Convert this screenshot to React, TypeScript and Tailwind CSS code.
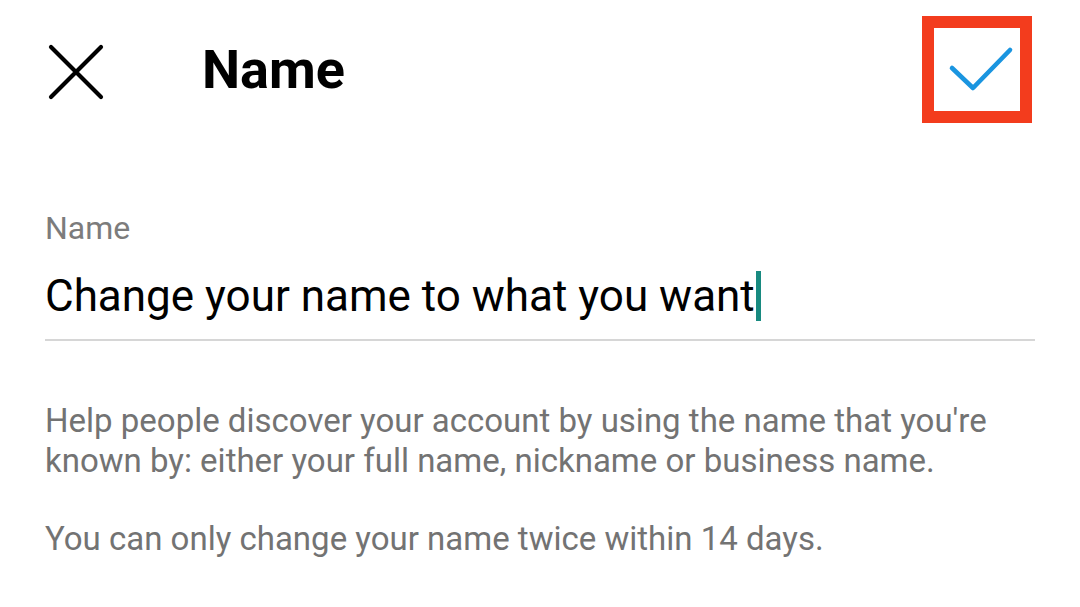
import React from "react";

function CloseIcon() {
  return (
    <svg width="58" height="58" viewBox="0 0 58 58" fill="none" aria-hidden>
      <path d="M4 4 L54 54 M54 4 L4 54" stroke="#000" strokeWidth="4.2" strokeLinecap="round" />
    </svg>
  );
}

function CheckIcon() {
  return (
    <svg width="86" height="83" viewBox="0 0 86 83" fill="none" aria-hidden>
      <path d="M18 40 L39 60 L76 22" stroke="#1a95e0" strokeWidth="4.6" strokeLinecap="round" strokeLinejoin="round" />
    </svg>
  );
}

export default function App() {
  return (
    <div className="h-[607px] w-[1080px] overflow-hidden bg-white font-['Roboto',sans-serif]">
      <header className="flex items-center pt-[16px] pl-[47px] pr-[48px]">
        <button type="button" aria-label="Close" className="mt-[5px] flex size-[58px] items-center justify-center">
          <CloseIcon />
        </button>
        <h1 className="ml-[97px] flex-1 text-[54px] font-bold leading-none text-black">Name</h1>
        <div className="flex h-[107px] w-[110px] items-center justify-center border-[12px] border-[#f33c1d]">
          <CheckIcon />
        </div>
      </header>

      <main className="px-[45px]">
        <div className="mt-[89px] text-[32px] leading-[32px] text-[#7c7c7c]">Name</div>
        <div className="mt-[26px] flex items-center border-b-2 border-[#d6d6d6] pb-[17px]">
          <span className="text-[44px] leading-[52px] text-black">Change your name to what you want</span>
          <span className="ml-[1px] h-[50px] w-[5px] bg-[#188a80]" />
        </div>
        <p className="mt-[60px] text-[33px] leading-[40px] text-[#737373]">
          Help people discover your account by using the name that you're known by: either your full name, nickname or business name.
        </p>
        <p className="mt-[38px] text-[33px] leading-[40px] text-[#737373]">
          You can only change your name twice within 14 days.
        </p>
      </main>
    </div>
  );
}
